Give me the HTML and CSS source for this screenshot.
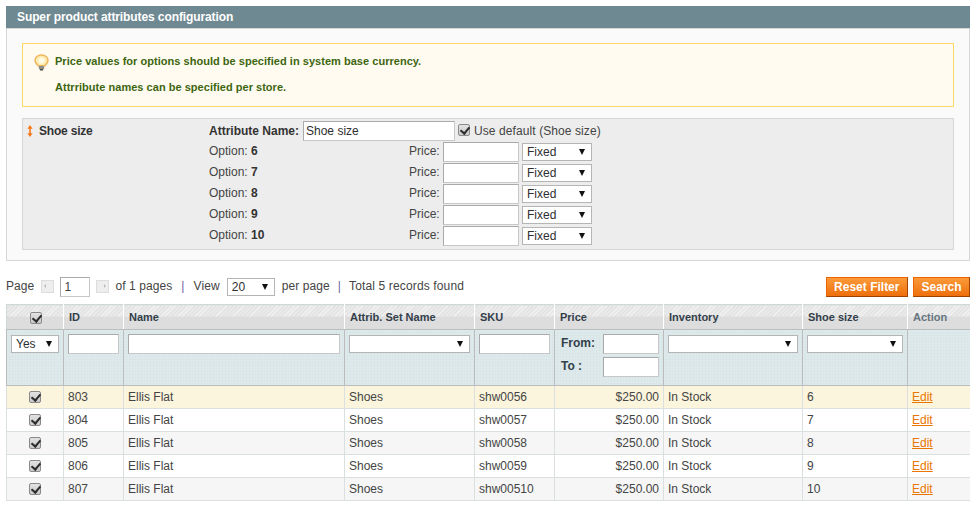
FILE: index.html
```html
<!DOCTYPE html>
<html lang="en">
<head>
    <meta charset="UTF-8">
    <title>Super product attributes configuration</title>
    <link rel="stylesheet" href="styles.css">
</head>
<body>

<div class="section-head">Super product attributes configuration</div>
<div class="section-body">
    <div class="notice">
        <svg class="bulb" width="15" height="17" viewBox="0 0 15 17">
            <path d="M7.5 1C3.9 1 1 3.4 1 6.4c0 2.4 1.8 3.6 3.2 5.4h6.6c1.4-1.8 3.2-3 3.2-5.4C14 3.4 11.1 1 7.5 1z" fill="#fdebb0" stroke="#efb45c" stroke-width="1.4"/>
            <path d="M7.5 3.6c-1.9 0-3.2 1.2-3.2 2.7 0 1.3 1 2.2 1.6 3.2h3.2c.6-1 1.6-1.9 1.6-3.2 0-1.5-1.3-2.7-3.2-2.7z" fill="#fffbe6"/>
            <rect x="4.8" y="12" width="5.4" height="3" fill="#8d8d84"/>
            <rect x="5.8" y="15" width="3.4" height="1.5" fill="#4f4f48"/>
        </svg>
        <p>Price values for options should be specified in system base currency.</p>
        <p>Attrribute names can be specified per store.</p>
    </div>

    <div class="attr-box">
        <div class="attr-title">
            <svg width="6" height="12" viewBox="0 0 6 12">
                <path d="M3 0L5.6 3.8H3.8V8.2H5.6L3 12L.4 8.2H2.2V3.8H.4z" fill="#f47a1c"/>
            </svg>
            <strong>Shoe size</strong>
        </div>
        <div class="attr-fields">
            <div class="attr-name">
                <label><strong>Attribute Name:</strong></label>
                <input type="text" class="input-name" value="Shoe size">
                <input type="checkbox" class="check" checked>
                <span class="use-default">Use default (Shoe size)</span>
            </div>
            <div class="option-row">
                <span class="option-label">Option: <strong>6</strong></span>
                <span class="price-label">Price:</span>
                <input type="text" class="input-price">
                <span class="select select-type">Fixed</span>
            </div>
            <div class="option-row">
                <span class="option-label">Option: <strong>7</strong></span>
                <span class="price-label">Price:</span>
                <input type="text" class="input-price">
                <span class="select select-type">Fixed</span>
            </div>
            <div class="option-row">
                <span class="option-label">Option: <strong>8</strong></span>
                <span class="price-label">Price:</span>
                <input type="text" class="input-price">
                <span class="select select-type">Fixed</span>
            </div>
            <div class="option-row">
                <span class="option-label">Option: <strong>9</strong></span>
                <span class="price-label">Price:</span>
                <input type="text" class="input-price">
                <span class="select select-type">Fixed</span>
            </div>
            <div class="option-row">
                <span class="option-label">Option: <strong>10</strong></span>
                <span class="price-label">Price:</span>
                <input type="text" class="input-price">
                <span class="select select-type">Fixed</span>
            </div>
        </div>
    </div>
</div>

<div class="toolbar">
    <div class="pager">
        <span>Page</span>
        <span class="pager-arrow prev"></span>
        <input type="text" class="input-page" value="1">
        <span class="pager-arrow next"></span>
        <span>of 1 pages</span>
        <span class="sep">|</span>
        <span>View</span>
        <span class="select select-view">20</span>
        <span>per page</span>
        <span class="sep sep-total">|</span>
        <span class="total">Total 5 records found</span>
    </div>
    <div class="actions">
        <button class="btn">Reset Filter</button>
        <button class="btn">Search</button>
    </div>
</div>

<table class="grid">
    <colgroup>
        <col class="col-check">
        <col class="col-id">
        <col class="col-name">
        <col class="col-set">
        <col class="col-sku">
        <col class="col-price">
        <col class="col-inv">
        <col class="col-size">
        <col class="col-action">
    </colgroup>
    <thead>
        <tr class="headings">
            <th class="center"><input type="checkbox" class="check" checked></th>
            <th>ID</th>
            <th>Name</th>
            <th>Attrib. Set Name</th>
            <th>SKU</th>
            <th>Price</th>
            <th>Inventory</th>
            <th>Shoe size</th>
            <th class="muted">Action</th>
        </tr>
        <tr class="filter">
            <td><span class="select select-fill">Yes</span></td>
            <td><input type="text" class="input-fill"></td>
            <td><input type="text" class="input-fill"></td>
            <td><span class="select select-fill"></span></td>
            <td><input type="text" class="input-fill"></td>
            <td>
                <div class="range"><strong>From:</strong><input type="text" class="input-range"></div>
                <div class="range"><strong>To :</strong><input type="text" class="input-range"></div>
            </td>
            <td><span class="select select-fill"></span></td>
            <td><span class="select select-fill"></span></td>
            <td></td>
        </tr>
    </thead>
    <tbody id="gridBody"></tbody>
</table>

<script>
    const products = [
        { id: 803, sku: 'shw0056', size: 6 },
        { id: 804, sku: 'shw0057', size: 7 },
        { id: 805, sku: 'shw0058', size: 8 },
        { id: 806, sku: 'shw0059', size: 9 },
        { id: 807, sku: 'shw00510', size: 10 }
    ];

    const gridBody = document.getElementById('gridBody');
    products.forEach(product => {
        const row = document.createElement('tr');
        row.innerHTML = `
            <td class="center"><input type="checkbox" class="check" checked></td>
            <td>${product.id}</td>
            <td>Ellis Flat</td>
            <td>Shoes</td>
            <td>${product.sku}</td>
            <td class="right">$250.00</td>
            <td>In Stock</td>
            <td>${product.size}</td>
            <td><a href="#">Edit</a></td>
        `;
        gridBody.appendChild(row);
    });
</script>

</body>
</html>
```
FILE: styles.css
```css
* {
    box-sizing: border-box;
}
body {
    font-family: "Liberation Sans", Arial, sans-serif;
    font-size: 12px;
    color: #444;
    background: #fff;
    margin: 0;
    padding: 6px 0 0 6px;
}
input[type="text"] {
    font: 12px "Liberation Sans", Arial, sans-serif;
    color: #2f2f2f;
    background: #fff;
    border: 1px solid #aaa;
    border-color: #aaa #c8c8c8 #c8c8c8 #aaa;
    padding: 2px 2px;
    margin: 0;
    outline: none;
}
.check {
    appearance: none;
    display: inline-block;
    position: relative;
    width: 12px;
    height: 12px;
    margin: 0;
    border: 1px solid #8a8a8a;
    border-radius: 2px;
    background: linear-gradient(#e2e2e2, #c9c9c9);
    vertical-align: middle;
}
.check::after {
    content: "";
    position: absolute;
    left: 3px;
    top: 0;
    width: 4px;
    height: 7px;
    border: solid #2b2b2b;
    border-width: 0 2px 2px 0;
    transform: rotate(40deg);
}
.select {
    display: inline-block;
    position: relative;
    height: 18px;
    line-height: 16px;
    padding-left: 4px;
    color: #2f2f2f;
    background: #fff;
    border: 1px solid #b5b5b5;
    vertical-align: middle;
}
.select::after {
    content: "";
    position: absolute;
    right: 6px;
    top: 5px;
    border-style: solid;
    border-width: 6px 3.5px 0;
    border-color: #111 transparent transparent;
}

.section-head {
    height: 22px;
    line-height: 23px;
    padding-left: 11px;
    background: #6f8992;
    color: #fff;
    font-weight: bold;
    letter-spacing: -.1px;
}
.section-body {
    height: 233px;
    padding: 14px 15px 0;
    background: #fafafa;
    border: 1px solid #d6d6d6;
}
.notice {
    position: relative;
    height: 64px;
    padding: 10px 0 0 32px;
    background: #fffbf0;
    border: 1px solid #ffd967;
    color: #3d6611;
    font-weight: bold;
    font-size: 11px;
    letter-spacing: .03px;
}
.notice p {
    margin: 0 0 12px;
    line-height: 14px;
}
.bulb {
    position: absolute;
    left: 11px;
    top: 10px;
}
.attr-box {
    display: flex;
    height: 132px;
    margin-top: 11px;
    padding: 2px 0 0 4px;
    background: #ededed;
    border: 1px solid #d6d6d6;
}
.attr-title {
    display: flex;
    align-items: center;
    gap: 6px;
    width: 182px;
    height: 20px;
    color: #333;
    letter-spacing: -.2px;
}
.attr-name {
    display: flex;
    align-items: center;
    height: 20px;
    margin-bottom: 1px;
}
.attr-name strong {
    color: #333;
}
.input-name {
    width: 152px;
    height: 20px;
    margin-left: 4px !important;
}
.attr-name .check {
    margin: -2px 0 0 3px;
}
.use-default {
    margin-left: 4px;
    letter-spacing: .09px;
}
.option-row {
    display: flex;
    align-items: flex-start;
    height: 21px;
    line-height: 19px;
}
.option-label {
    width: 200px;
}
.option-label strong {
    color: #333;
}
.price-label {
    width: 34px;
}
.input-price {
    width: 76px;
    height: 20px;
}
.select-type {
    width: 70px;
    margin: 1px 0 0 3px;
    line-height: 16px;
}

.toolbar {
    display: flex;
    justify-content: space-between;
    height: 20px;
    margin-top: 16px;
}
.pager {
    display: flex;
    align-items: flex-start;
    line-height: 18px;
    letter-spacing: .09px;
}
.pager-arrow {
    position: relative;
    width: 13px;
    height: 13px;
    margin: 3px 6px 0;
    background: #eee;
    border: 1px solid #ddd;
}
.pager-arrow.prev {
    margin-left: 7px;
}
.pager-arrow::after {
    content: "";
    position: absolute;
    top: 3px;
    border-style: solid;
    border-width: 2.5px;
    border-color: transparent;
}
.prev::after {
    left: 0;
    border-right-color: #bbb;
}
.next::after {
    right: 0;
    border-left-color: #bbb;
}
.input-page {
    width: 30px;
    height: 20px;
    padding-left: 3px !important;
    color: #444 !important;
}
.sep {
    margin: 0 9px;
    color: #6f5fa0;
}
.sep-total {
    margin: 0 8px;
}
.total {
    letter-spacing: .14px;
}
.select-view {
    width: 48px;
    height: 18px;
    margin: 1px 7px 0;
    line-height: 16px;
}
.actions {
    display: flex;
    gap: 5px;
}
.btn {
    height: 20px;
    padding: 0 7.5px;
    font: bold 12px "Liberation Sans", Arial, sans-serif;
    color: #fff;
    background: linear-gradient(#fb9a3a, #ee6f0c);
    border: 1px solid #d8660f;
    border-color: #ed6502 #a04300 #a04300 #ed6502;
}

.grid {
    width: 964px;
    table-layout: fixed;
    border-collapse: collapse;
    margin-top: 7px;
}
.col-check { width: 57px; }
.col-id { width: 60px; }
.col-name { width: 221px; }
.col-set { width: 130px; }
.col-sku { width: 80px; }
.col-price { width: 109px; }
.col-inv { width: 139px; }
.col-size { width: 105px; }
.col-action { width: 63px; }
.grid th, .grid td {
    padding: 0 4px;
    border: 1px solid #dadfe0;
    border-width: 0 1px 1px 1px;
    text-align: left;
    vertical-align: middle;
    overflow: hidden;
}
.grid .center {
    text-align: center;
}
.grid .right {
    text-align: right;
}
.headings th {
    height: 25px;
    padding-left: 5px;
    font-size: 11px;
    color: #33404a;
    border: 1px solid #d1d8d8;
    border-bottom: 1px solid #b9bdbd;
    border-left-color: #fff;
    border-right-color: #fff;
    background:
        linear-gradient(#0000 11px, #dddddd 11px),
        repeating-linear-gradient(135deg, #f4f4f4 0 1px, #e2e2e2 1px 3px);
}
.headings th:first-child {
    border-left-color: #d1d8d8;
}
.headings th:last-child {
    border-right-color: #d1d8d8;
}
.headings .muted {
    color: #67767e;
}
.filter td {
    height: 56px;
    padding: 4px 4px 0;
    vertical-align: top;
    border: 1px solid #bcbcbc;
    border-top: 0;
    background:
        linear-gradient(#e1ebec 1px, #0000 1px) 0 0 / 3px 3px,
        linear-gradient(90deg, #e1ebec 1px, #0000 1px) 0 0 / 3px 3px,
        #d5e3e5;
}
.select-fill {
    width: 100%;
    margin-top: 1px;
}
.input-fill {
    display: block;
    width: 100%;
    height: 20px;
}
.range {
    display: flex;
    justify-content: space-between;
    align-items: flex-start;
    height: 20px;
    margin-bottom: 3px;
    padding-left: 2px;
    line-height: 19px;
    color: #33404a;
}
.input-range {
    width: 56px;
    height: 20px;
}
.grid tbody td {
    height: 23px;
    padding-bottom: 1px;
    color: #444;
}
.grid tbody tr:nth-child(odd) {
    background: #f6f6f6;
}
.grid tbody tr:first-child {
    background: #fcf5dd;
}
.grid tbody a {
    color: #ea7601;
}
```
